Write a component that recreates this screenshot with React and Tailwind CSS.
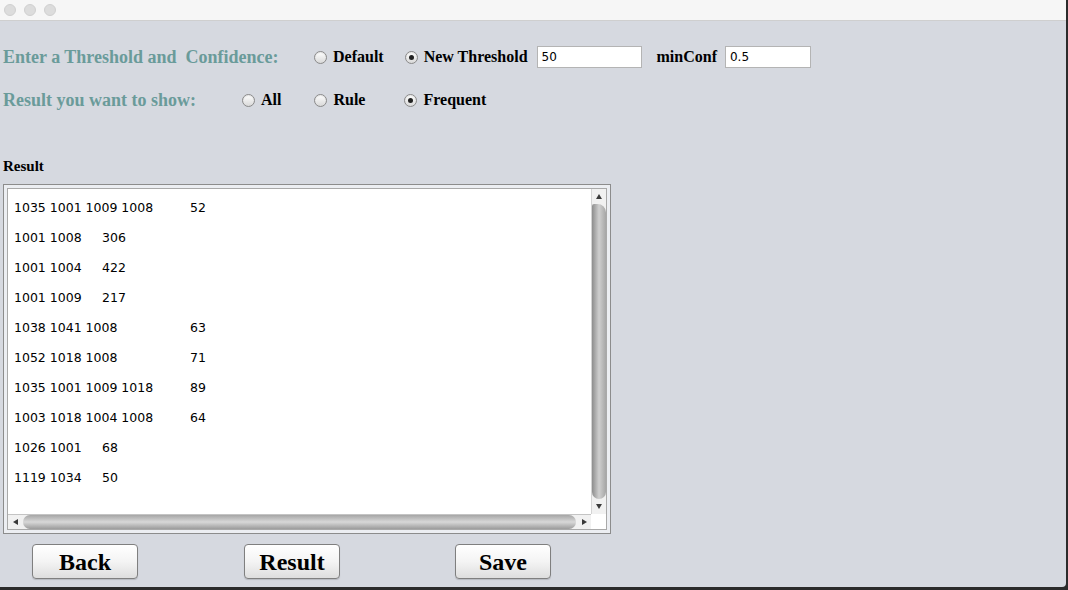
import React from 'react';

const rows = [
  '1035 1001 1009 1008\t52',
  '1001 1008\t306',
  '1001 1004\t422',
  '1001 1009\t217',
  '1038 1041 1008\t63',
  '1052 1018 1008\t71',
  '1035 1001 1009 1018\t89',
  '1003 1018 1004 1008\t64',
  '1026 1001\t68',
  '1119 1034\t50',
];

function Radio({ label, checked, className = '' }) {
  return (
    <div className={`flex items-center ${className}`}>
      <span className="w-[13px] h-[13px] rounded-full border border-[#8a8a8a] bg-gradient-to-b from-white to-[#d9d9d9] flex items-center justify-center shadow-[inset_0_1px_1px_rgba(0,0,0,0.1)]">
        {checked && <span className="w-[5px] h-[5px] rounded-full bg-[#222]" />}
      </span>
      <span className="ml-[6px] text-[16px] font-bold text-black leading-none">{label}</span>
    </div>
  );
}

function Field({ value, className = '' }) {
  return (
    <div className={`h-[22px] bg-white border border-[#b4b4b4] flex items-center px-[4px] text-[12px] text-black font-['DejaVu_Sans',sans-serif] ${className}`}>
      {value}
    </div>
  );
}

function Arrow({ dir }) {
  const pts = {
    up: '4,1 7,6 1,6',
    down: '1,1 7,1 4,6',
    left: '1,4 6,1 6,7',
    right: '2,1 7,4 2,7',
  }[dir];
  return (
    <svg width="8" height="8" viewBox="0 0 8 8">
      <polygon points={pts} fill="#3a3a3a" />
    </svg>
  );
}

function Button({ label, className = '' }) {
  return (
    <button className={`h-[35px] rounded-[4px] border border-[#7f7f7f] bg-gradient-to-b from-white via-[#f4f4f4] to-[#dedede] shadow-[0_1px_1px_rgba(0,0,0,0.15)] text-[24px] font-bold text-black leading-none ${className}`}>
      {label}
    </button>
  );
}

export default function App() {
  return (
    <div className="w-[1068px] h-[590px] bg-[#2b2b2b] font-['Liberation_Serif',serif] overflow-hidden">
      <div className="w-[1066px] h-[587px] bg-[#d6d9e0] rounded-br-[4px] flex flex-col">
        {/* title bar */}
        <div className="h-[21px] bg-[#f6f6f6] border-b border-[#cfcfcf] flex items-center pl-[4px] gap-[8px]">
          <span className="w-[12px] h-[12px] rounded-full bg-[#dcdcdc] border border-[#d0d0d0]" />
          <span className="w-[12px] h-[12px] rounded-full bg-[#dcdcdc] border border-[#d0d0d0]" />
          <span className="w-[12px] h-[12px] rounded-full bg-[#dcdcdc] border border-[#d0d0d0]" />
        </div>

        {/* threshold row */}
        <div className="mt-[25px] h-[22px] flex items-center pl-[3px]">
          <div className="w-[311px] text-[18px] font-bold text-[#6a9b9a] whitespace-pre leading-none">Enter a Threshold and  Confidence:</div>
          <Radio label="Default" />
          <Radio label="New Threshold" checked className="ml-[21px]" />
          <Field value="50" className="ml-[9px] w-[105px]" />
          <span className="ml-[15px] text-[16px] font-bold text-black leading-none">minConf</span>
          <Field value="0.5" className="ml-[8px] w-[86px]" />
        </div>

        {/* show row */}
        <div className="mt-[21px] h-[22px] flex items-center pl-[3px]">
          <div className="w-[239px] text-[18px] font-bold text-[#6a9b9a] leading-none">Result you want to show:</div>
          <Radio label="All" />
          <Radio label="Rule" className="ml-[33px]" />
          <Radio label="Frequent" checked className="ml-[39px]" />
        </div>

        <div className="mt-[46px] pl-[3px] h-[18px] flex items-center text-[15px] font-bold text-black">Result</div>

        {/* result area */}
        <div className="mt-[9px] ml-[3px] w-[608px] h-[350px] border border-[#8c8c8c] bg-[#eceef2] p-[3px]">
          <div className="w-full h-full border border-[#a9a9a9] grid grid-cols-[1fr_15px] grid-rows-[1fr_15px] bg-white">
            <div className="bg-white pt-[4px] pl-[6px] font-['DejaVu_Sans',sans-serif] text-[12.5px] text-black">
              {rows.map((r) => (
                <div key={r} className="h-[30px] leading-[30px] whitespace-pre [tab-size:88px]">{r}</div>
              ))}
            </div>
            {/* vertical scrollbar */}
            <div className="bg-[#f1f1f1] border-l border-[#d4d4d4] flex flex-col items-center">
              <div className="h-[15px] flex items-center justify-center"><Arrow dir="up" /></div>
              <div className="flex-1 w-[14px] rounded-tr-[12px] rounded-tl-[3px] rounded-b-[10px] bg-gradient-to-r from-[#8e8e8e] via-[#cfcfcf] to-[#a6a6a6]" />
              <div className="h-[15px] flex items-center justify-center"><Arrow dir="down" /></div>
            </div>
            {/* horizontal scrollbar */}
            <div className="bg-[#f1f1f1] border-t border-[#c4c4c4] flex items-center">
              <div className="w-[15px] flex items-center justify-center"><Arrow dir="left" /></div>
              <div className="flex-1 h-[14px] rounded-l-[10px] rounded-r-[10px] bg-gradient-to-b from-[#a6a6a6] via-[#d8d8d8] to-[#9c9c9c]" />
              <div className="w-[15px] flex items-center justify-center"><Arrow dir="right" /></div>
            </div>
            <div className="bg-white" />
          </div>
        </div>

        {/* buttons */}
        <div className="mt-[10px] flex">
          <Button label="Back" className="ml-[32px] w-[106px]" />
          <Button label="Result" className="ml-[106px] w-[96px]" />
          <Button label="Save" className="ml-[115px] w-[96px]" />
        </div>
      </div>
    </div>
  );
}
